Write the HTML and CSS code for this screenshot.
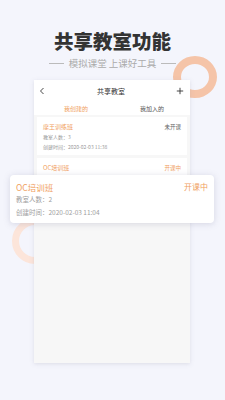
FILE: index.html
```html
<!DOCTYPE html>
<html lang="zh">
<head>
<meta charset="utf-8">
<link rel="stylesheet" href="styles.css">
</head>
<body>
<div class="page">
  <div class="ring ring-tr"></div>
  <div class="ring ring-bl"></div>
  <header class="hero">
    <h1 class="title">共享教室功能</h1>
    <p class="subtitle">模拟课堂 上课好工具</p>
  </header>
  <section class="phone">
    <div class="nav">
      <svg class="nav-icon" viewBox="0 0 8 8" width="8" height="8"><path d="M5.5 1 L2.5 4 L5.5 7" fill="none" stroke="#333" stroke-width="0.9"/></svg>
      <span class="nav-title">共享教室</span>
      <svg class="nav-icon" viewBox="0 0 8 8" width="8" height="8"><path d="M4 0.8 V7.2 M0.8 4 H7.2" fill="none" stroke="#333" stroke-width="0.9"/></svg>
    </div>
    <div class="tabs">
      <span class="tab active">我创建的</span>
      <span class="tab">我加入的</span>
    </div>
    <div class="list">
      <div class="item">
        <div class="item-head"><span class="item-name">摩王训练班</span><span class="item-status">未开课</span></div>
        <div class="item-row">教室人数：3</div>
        <div class="item-row">创建时间：2020-02-03 11:38</div>
      </div>
      <div class="item">
        <div class="item-head"><span class="item-name">OC培训班</span><span class="item-status on">开课中</span></div>
      </div>
    </div>
  </section>
  <div class="popup">
    <div class="popup-head"><span class="popup-name">OC培训班</span><span class="popup-status">开课中</span></div>
    <div class="popup-row">教室人数：2</div>
    <div class="popup-row">创建时间：2020-02-03 11:04</div>
  </div>
</div>
</body>
</html>
```
FILE: styles.css
```css
* { box-sizing: border-box; margin: 0; padding: 0; }
html, body { background: #f4f5fc; }
body { font-family: "Noto Sans CJK SC", "Noto Sans", sans-serif; }
.page {
  position: relative;
  width: 225px;
  height: 400px;
  overflow: hidden;
  background: #f4f5fc;
  display: flex;
  flex-direction: column;
}
.ring {
  position: absolute;
  border-radius: 50%;
}
.ring-tr {
  left: 173px;
  top: 56px;
  width: 44px;
  height: 42px;
  border: 8px solid #f5c4a8;
}
.ring-bl {
  left: 12px;
  top: 218px;
  width: 46px;
  height: 46px;
  border: 7px solid #fce5da;
}
.hero {
  position: relative;
  padding-top: 29px;
  display: flex;
  flex-direction: column;
  align-items: center;
}
.title {
  font-size: 19.5px;
  line-height: 24px;
  font-weight: 900;
  color: #333;
}
.subtitle {
  margin-top: 3px;
  font-size: 9.5px;
  line-height: 14px;
  color: #ababab;
  display: flex;
  align-items: center;
  gap: 5px;
}
.subtitle::before, .subtitle::after {
  content: "";
  width: 15px;
  height: 1px;
  background: #bbbbbb;
}
.phone {
  position: relative;
  margin: 10px 0 0 34px;
  width: 156px;
  height: 283px;
  background: #f7f7f7;
  box-shadow: 0 1px 4px rgba(150, 150, 170, 0.25);
  display: flex;
  flex-direction: column;
}
.nav {
  height: 22px;
  background: #fff;
  display: flex;
  align-items: center;
  justify-content: space-between;
  padding: 0 6px 0 4px;
}
.nav-title {
  font-size: 7px;
  color: #333;
}
.tabs {
  height: 13px;
  background: #fff;
  display: flex;
  align-items: center;
}
.tab {
  flex: 1;
  text-align: center;
  font-size: 6px;
  color: #555;
}
.tab.active { color: #f0a060; padding-left: 4px; }
.list {
  padding: 2px 3px;
  display: flex;
  flex-direction: column;
  gap: 3px;
}
.item {
  background: #fff;
  padding: 5px 6px 4px;
  display: flex;
  flex-direction: column;
  gap: 2px;
}
.item-head {
  display: flex;
  justify-content: space-between;
  align-items: center;
  height: 9px;
}
.item-name { font-size: 6px; color: #f0a060; }
.item-status { font-size: 5.5px; color: #666; }
.item-status.on { color: #f0a060; }
.item-row { font-size: 5px; color: #999; height: 8px; line-height: 8px; }
.popup {
  position: absolute;
  left: 10px;
  top: 175px;
  width: 204px;
  height: 48px;
  background: #fff;
  border-radius: 4px;
  box-shadow: 0 1px 6px rgba(140, 140, 170, 0.3);
  padding: 5px 6px 4px 6px;
  display: flex;
  flex-direction: column;
}
.popup-head {
  display: flex;
  justify-content: space-between;
  align-items: center;
  height: 13px;
}
.popup-name { font-size: 8.5px; color: #f0a060; }
.popup-status { font-size: 8px; color: #f0a060; }
.popup-row { font-size: 6.5px; color: #a0a0a0; height: 13px; line-height: 13px; }
```
